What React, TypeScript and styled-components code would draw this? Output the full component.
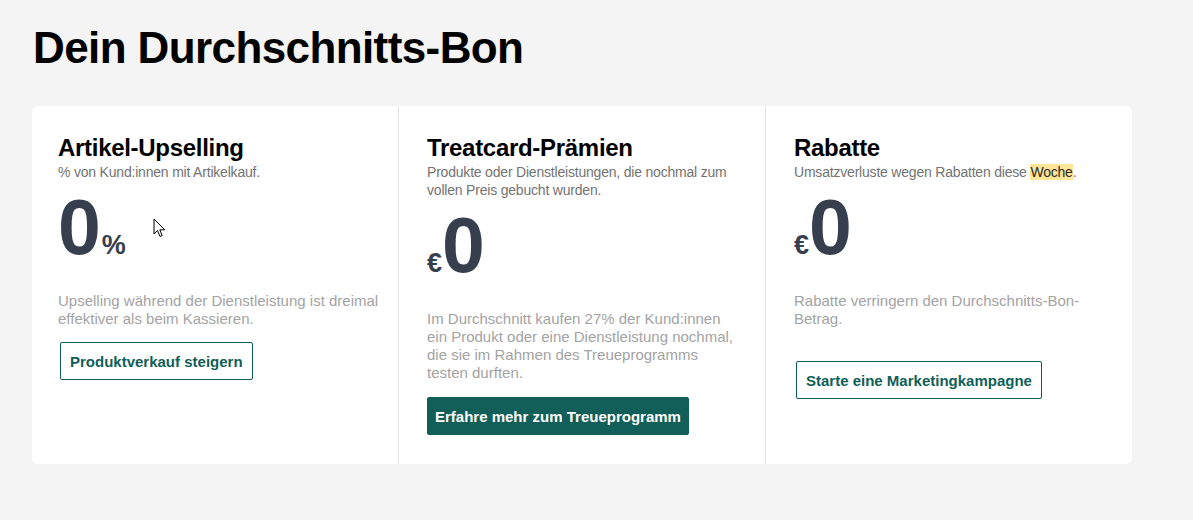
import styled, { createGlobalStyle } from "styled-components";

const GlobalStyle = createGlobalStyle`
  html, body {
    margin: 0;
    padding: 0;
    background: #f4f4f4;
    font-family: "Liberation Sans", Arial, sans-serif;
  }
`;

interface StatProps {
  title: string;
  subtitle: React.ReactNode;
  value: string;
  prefix?: string;
  suffix?: string;
  description: string;
  action: string;
  filled?: boolean;
  actionGap?: number;
  first?: boolean;
  children?: React.ReactNode;
}

const StatColumn = ({
  title,
  subtitle,
  value,
  prefix,
  suffix,
  description,
  action,
  filled,
  actionGap = 15,
  first,
  children,
}: StatProps) => {
  return (
    <Column $first={first}>
      <Title>{title}</Title>
      <Subtitle>{subtitle}</Subtitle>
      <Figure>
        {prefix && <Unit>{prefix}</Unit>}
        <Value>{value}</Value>
        {suffix && <Unit $after>{suffix}</Unit>}
      </Figure>
      <Description>{description}</Description>
      <Action $filled={filled} $gap={actionGap}>
        {action}
      </Action>
      {children}
    </Column>
  );
};

const Cursor = () => (
  <CursorMark width="13" height="20" viewBox="0 0 13 20">
    <path
      d="M1 1 L1 16 L4.5 12.5 L7 18.5 L9.2 17.6 L6.8 11.8 L11.8 11.8 Z"
      fill="#fff"
      stroke="#000"
      strokeWidth="1"
      strokeLinejoin="round"
    />
  </CursorMark>
);

export default function App() {
  return (
    <>
      <GlobalStyle />
      <Page>
        <Heading>Dein Durchschnitts-Bon</Heading>
        <Card>
          <StatColumn
            first
            title="Artikel-Upselling"
            subtitle="% von Kund:innen mit Artikelkauf."
            value="0"
            suffix="%"
            description="Upselling während der Dienstleistung ist dreimal effektiver als beim Kassieren."
            action="Produktverkauf steigern"
            actionGap={14}
          >
            <Cursor />
          </StatColumn>
          <StatColumn
            title="Treatcard-Prämien"
            subtitle="Produkte oder Dienstleistungen, die nochmal zum vollen Preis gebucht wurden."
            value="0"
            prefix="€"
            description="Im Durchschnitt kaufen 27% der Kund:innen ein Produkt oder eine Dienstleistung nochmal, die sie im Rahmen des Treueprogramms testen durften."
            action="Erfahre mehr zum Treueprogramm"
            filled
          />
          <StatColumn
            title="Rabatte"
            subtitle={
              <>
                Umsatzverluste wegen Rabatten diese <Mark>Woche</Mark>.
              </>
            }
            value="0"
            prefix="€"
            description="Rabatte verringern den Durchschnitts-Bon-Betrag."
            action="Starte eine Marketingkampagne"
            actionGap={33}
          />
        </Card>
      </Page>
    </>
  );
}

const Page = styled.div`
  padding: 22px 32px 40px 32px;
`;

const Heading = styled.h1`
  margin: 0 0 33px 1px;
  font-size: 44px;
  line-height: 51px;
  font-weight: 700;
  letter-spacing: -0.6px;
  color: #000;
`;

const Card = styled.div`
  width: 1100px;
  display: grid;
  grid-template-columns: 366px 367px 367px;
  background: #fff;
  border-radius: 6px;
`;

const Column = styled.div<{ $first?: boolean }>`
  position: relative;
  display: flex;
  flex-direction: column;
  align-items: flex-start;
  padding: 28px ${(p) => (p.$first ? "14px 29px 26px" : "26px 29px 28px")};
  border-left: ${(p) => (p.$first ? "none" : "1px solid #e4e4e4")};
`;

const Title = styled.h2`
  margin: 0;
  font-size: 24px;
  line-height: 28px;
  font-weight: 700;
  letter-spacing: -0.3px;
  color: #000;
`;

const Subtitle = styled.p`
  margin: 1px 0 0 0;
  font-size: 14px;
  line-height: 18px;
  color: #737373;
  letter-spacing: -0.2px;
`;

const Mark = styled.span`
  background: #fde59a;
  color: #2b2b2b;
`;

const Figure = styled.div`
  display: flex;
  align-items: baseline;
  margin-top: 6px;
  color: #373f4f;
  font-weight: 700;
`;

const Value = styled.span`
  font-size: 77px;
  line-height: 80px;
`;

const Unit = styled.span<{ $after?: boolean }>`
  font-size: 27px;
  line-height: 28px;
  margin-left: ${(p) => (p.$after ? "1px" : "0")};
`;

const Description = styled.p`
  margin: 25px 0 0 0;
  font-size: 15px;
  line-height: 18px;
  color: #a3a3a3;
`;

const Action = styled.button<{ $filled?: boolean; $gap: number }>`
  margin-top: ${(p) => p.$gap}px;
  margin-left: ${(p) => (p.$filled ? "0" : "2px")};
  height: 38px;
  padding: 0 ${(p) => (p.$filled ? "7px" : "9px")};
  font-family: "Liberation Sans", Arial, sans-serif;
  font-size: 15px;
  font-weight: 700;
  border-radius: 2px;
  border: 1px solid #0f5f58;
  background: ${(p) => (p.$filled ? "#115f58" : "#fff")};
  color: ${(p) => (p.$filled ? "#fff" : "#0f5f58")};
  cursor: pointer;
`;

const CursorMark = styled.svg`
  position: absolute;
  left: 121px;
  top: 112px;
`;
